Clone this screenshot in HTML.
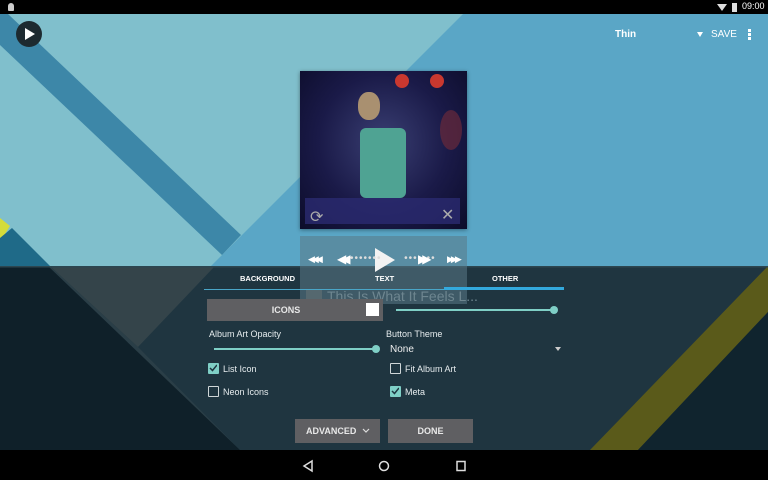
<!DOCTYPE html>
<html><head><meta charset="utf-8"><style>
*{margin:0;padding:0;box-sizing:border-box}
body{width:768px;height:480px;overflow:hidden;position:relative;font-family:"Liberation Sans",sans-serif;background:#000}
.abs{position:absolute}
.t{color:#e6ecee;font-size:9px}
.cb{position:absolute;width:11px;height:11px;border:1.5px solid #cfd6d8;border-radius:1px}
.cb.on{background:#7fcfc6;border-color:#7fcfc6}
.btn{position:absolute;background:#5f5f62;color:#e8e8e8;font-size:9px;font-weight:bold;text-align:center}
</style></head><body>
<svg class="abs" style="left:0;top:14px" width="768" height="436" viewBox="0 14 768 436">
<rect x="0" y="14" width="768" height="436" fill="#5aa6c6"/>
<polygon points="0,14 463,14 211,266 0,266" fill="#80bfcc"/>
<polygon points="8,14 241,235 222,255 0,45 0,14" fill="#3d87a8"/>
<polygon points="0,218 10,226 0,242" fill="#d4dc3a"/>
<polygon points="0,238 12,228 50,266 0,266" fill="#1f6a88"/>
<!-- panel -->
<rect x="0" y="266" width="768" height="184" fill="#1f3540"/>
<polygon points="0,266 50,266 138,347 240,450 0,450" fill="#2a3e47"/>
<polygon points="50,266 215,266 138,347" fill="#34444a"/>
<polygon points="0,266 48,266 240,450 0,450" fill="#0f2029"/>
<polygon points="768,266 590,450 638,450 768,312" fill="#5a5a1a"/>
<polygon points="768,312 638,450 768,450" fill="#10242e"/>
<rect x="0" y="266" width="768" height="1.5" fill="#2c4650"/>
</svg>
<!-- status bar -->
<div class="abs" style="left:0;top:0;width:768px;height:14px;background:#000"></div>
<div class="abs" style="left:8px;top:3px;width:6px;height:8px;background:#ccc;border-radius:3px 3px 1px 1px"></div>
<div class="abs" style="left:717px;top:4px;width:0;height:0;border-left:5px solid transparent;border-right:5px solid transparent;border-top:7px solid #ddd"></div>
<div class="abs" style="left:732px;top:3px;width:5px;height:9px;background:#ddd"></div>
<div class="abs" style="left:742px;top:1px;color:#fff;font-size:9px">09:00</div>
<!-- top bar -->
<div class="abs" style="left:16px;top:21px;width:26px;height:26px;border-radius:50%;background:#1d2a30"></div>
<div class="abs" style="left:25px;top:28px;width:0;height:0;border-top:6px solid transparent;border-bottom:6px solid transparent;border-left:10px solid #fff"></div>
<div class="abs" style="left:615px;top:29px;color:#fff;font-size:10px;font-weight:bold">Thin</div>
<div class="abs" style="left:697px;top:32px;border-left:3.5px solid transparent;border-right:3.5px solid transparent;border-top:5px solid #fff"></div>
<div class="abs" style="left:711px;top:29px;color:#fff;font-size:10px">SAVE</div>
<div class="abs" style="left:748px;top:29px;width:2.5px;height:2.5px;background:#fff;box-shadow:0 4px #fff,0 8px #fff"></div>
<!-- album art -->
<div class="abs" style="left:300px;top:71px;width:167px;height:158px;background:radial-gradient(ellipse at 50% 45%,#3a3f73 0%,#1a1a48 55%,#0c0c2a 100%);box-shadow:0 1px 4px rgba(0,0,0,.4)"></div>
<div class="abs" style="left:395px;top:74px;width:14px;height:14px;border-radius:50%;background:#c9382f"></div>
<div class="abs" style="left:430px;top:74px;width:14px;height:14px;border-radius:50%;background:#c9382f"></div>
<div class="abs" style="left:440px;top:110px;width:22px;height:40px;border-radius:50%;background:#6a2a3a;opacity:.7"></div>
<div class="abs" style="left:358px;top:92px;width:22px;height:28px;border-radius:45%;background:#a99070"></div>
<div class="abs" style="left:360px;top:128px;width:46px;height:70px;background:#4fa393;border-radius:6px"></div>
<div class="abs" style="left:305px;top:198px;width:155px;height:26px;background:#2a2a70;opacity:.8"></div>
<div class="abs" style="left:310px;top:207px;color:#aaa;font-size:16px">⟳</div>
<div class="abs" style="left:441px;top:205px;color:#aaa;font-size:16px">✕</div>
<!-- control box -->
<div class="abs" style="left:300px;top:236px;width:167px;height:68px;background:rgba(90,120,135,.55)"></div>
<div class="abs" style="left:375px;top:248px;border-top:12px solid transparent;border-bottom:12px solid transparent;border-left:20px solid #f2f2f2"></div>
<div class="abs" style="left:308px;top:254px;color:#fff;font-size:9px;letter-spacing:-3px">◀◀◀</div>
<div class="abs" style="left:337px;top:252px;color:#fff;font-size:12px;letter-spacing:-5px">◀◀</div>
<div class="abs" style="left:350px;top:253px;color:#ddd;font-size:10px;letter-spacing:1px">•••••••&nbsp;&nbsp;&nbsp;&nbsp;&nbsp;&nbsp;•••••••</div>
<div class="abs" style="left:418px;top:252px;color:#fff;font-size:12px;letter-spacing:-5px">▶▶</div>
<div class="abs" style="left:447px;top:254px;color:#fff;font-size:9px;letter-spacing:-3px">▶▶▶</div>
<div class="abs" style="left:306px;top:290px;width:16px;height:10px;background:#55686f"></div>
<div class="abs" style="left:327px;top:288px;color:#6e8690;font-size:14px">This Is What It Feels L...</div>
<!-- tabs -->
<div class="abs" style="left:240px;top:274px;color:#fff;font-size:7.5px;font-weight:bold">BACKGROUND</div>
<div class="abs" style="left:375px;top:274px;color:#fff;font-size:7.5px;font-weight:bold">TEXT</div>
<div class="abs" style="left:492px;top:274px;color:#fff;font-size:7.5px;font-weight:bold">OTHER</div>
<div class="abs" style="left:204px;top:289px;width:240px;height:1px;background:#4aa6c8"></div>
<div class="abs" style="left:444px;top:287px;width:120px;height:3px;background:#33a9dd"></div>
<!-- icons row -->
<div class="btn" style="left:207px;top:299px;width:176px;height:22px;line-height:22px;padding-right:18px">ICONS</div>
<div class="abs" style="left:366px;top:303px;width:13px;height:13px;background:#fff"></div>
<div class="abs" style="left:396px;top:309px;width:158px;height:2px;background:#7fcfc6"></div>
<div class="abs" style="left:550px;top:306px;width:8px;height:8px;border-radius:50%;background:#7fcfc6"></div>
<!-- opacity / theme -->
<div class="abs t" style="left:209px;top:329px">Album Art Opacity</div>
<div class="abs" style="left:214px;top:348px;width:162px;height:2px;background:#7fcfc6"></div>
<div class="abs" style="left:372px;top:345px;width:8px;height:8px;border-radius:50%;background:#7fcfc6"></div>
<div class="abs t" style="left:386px;top:329px">Button Theme</div>
<div class="abs" style="left:390px;top:344px;color:#eee;font-size:10px">None</div>
<div class="abs" style="left:555px;top:347px;border-left:3px solid transparent;border-right:3px solid transparent;border-top:4px solid #ccc"></div>
<!-- checkboxes -->
<div class="cb on" style="left:208px;top:363px"><svg width="8" height="8" style="position:absolute;left:0;top:0"><path d="M1 4 L3.5 6.5 L8 1" stroke="#1e3540" stroke-width="1.5" fill="none"/></svg></div>
<div class="abs t" style="left:223px;top:364px">List Icon</div>
<div class="cb" style="left:390px;top:363px"></div>
<div class="abs t" style="left:405px;top:364px">Fit Album Art</div>
<div class="cb" style="left:208px;top:386px"></div>
<div class="abs t" style="left:223px;top:387px">Neon Icons</div>
<div class="cb on" style="left:390px;top:386px"><svg width="8" height="8" style="position:absolute;left:0;top:0"><path d="M1 4 L3.5 6.5 L8 1" stroke="#1e3540" stroke-width="1.5" fill="none"/></svg></div>
<div class="abs t" style="left:405px;top:387px">Meta</div>
<!-- buttons -->
<div class="btn" style="left:295px;top:419px;width:85px;height:24px;line-height:24px;text-align:left;padding-left:11px">ADVANCED</div>
<svg class="abs" style="left:362px;top:428px" width="8" height="6"><path d="M1 1 L4 4 L7 1" stroke="#ddd" stroke-width="1.2" fill="none"/></svg>
<div class="btn" style="left:388px;top:419px;width:85px;height:24px;line-height:24px">DONE</div>
<!-- nav -->
<div class="abs" style="left:0;top:450px;width:768px;height:30px;background:#000"></div>
<svg class="abs" style="left:300px;top:458px" width="170" height="16">
<path d="M12 3 L4 8 L12 13 Z" stroke="#ddd" stroke-width="1.5" fill="none"/>
<circle cx="84" cy="8" r="4.5" stroke="#ddd" stroke-width="1.5" fill="none"/>
<rect x="157" y="3.5" width="8" height="9" stroke="#ddd" stroke-width="1.5" fill="none"/>
</svg>
</body></html>
